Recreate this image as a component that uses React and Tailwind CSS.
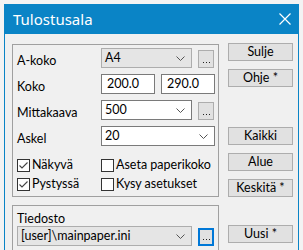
import React from 'react';

const font = { fontFamily: 'Lato, "Noto Sans", sans-serif' };
const titleFont = { fontFamily: '"Noto Sans", sans-serif' };

function Chevron() {
  return (
    <svg width="9" height="5" viewBox="0 0 9 5" className="shrink-0">
      <path d="M0.5 0.5 L4.5 4.5 L8.5 0.5" fill="none" stroke="#555" strokeWidth="1" />
    </svg>
  );
}

function Combo({ value, width, gray }) {
  return (
    <div
      className={`h-[20px] flex items-center justify-between pl-[3px] pr-[6px] border ${gray ? 'bg-[#e5e5e5] border-[#adadad]' : 'bg-white border-[#7a7a7a]'}`}
      style={{ width }}
    >
      <span className="leading-none">{value}</span>
      <Chevron />
    </div>
  );
}

function Dots({ focused }) {
  return (
    <div
      className={`w-[16px] h-[18px] mt-[2px] flex items-end justify-center gap-[2px] pb-[4px] bg-[#e1e1e1] ${focused ? 'border-2 border-[#0078d7]' : 'border border-[#adadad]'}`}
    >
      <div className="w-[1px] h-[1px] bg-[#222]" />
      <div className="w-[1px] h-[1px] bg-[#222]" />
      <div className="w-[1px] h-[1px] bg-[#222]" />
    </div>
  );
}

function Check({ checked, label }) {
  return (
    <div className="flex items-center h-[13px]">
      <div className="w-[13px] h-[13px] border border-[#333] bg-white flex items-center justify-center">
        {checked && (
          <svg width="11" height="11" viewBox="0 0 11 11">
            <path d="M1.5 5.5 L4 8 L9.5 2.5" fill="none" stroke="#444" strokeWidth="1.1" />
          </svg>
        )}
      </div>
      <span className="ml-[2px] leading-none">{label}</span>
    </div>
  );
}

function Btn({ children, className = '' }) {
  return (
    <div className={`w-[65px] h-[18px] bg-[#e1e1e1] border border-[#adadad] flex items-center justify-center leading-none ${className}`}>
      {children}
    </div>
  );
}

function Row({ label, children }) {
  return (
    <div className="flex items-start h-[20px]">
      <div className="w-[84px] pt-[7px] leading-none">{label}</div>
      <div className="flex">{children}</div>
    </div>
  );
}

export default function App() {
  return (
    <div className="w-[303px] h-[250px] overflow-hidden bg-[#f3f3f3] pt-[4px] pl-[4px] pr-[4px] text-[12.5px] text-black" style={font}>
      <div className="w-[295px] h-[260px] border-x border-[#0a84c6] bg-[#f0f0f0]">
        {/* Title bar */}
        <div className="h-[30px] bg-[#0a84c6] flex items-center justify-between pl-[8px] pr-[7px] text-white">
          <span className="text-[15px] leading-none" style={titleFont}>Tulostusala</span>
          <svg width="12" height="12" viewBox="0 0 12 12">
            <path d="M0.5 0.5 L11.5 11.5 M11.5 0.5 L0.5 11.5" stroke="white" strokeWidth="1.2" />
          </svg>
        </div>

        <div className="flex">
          {/* Left */}
          <div className="ml-[7px] flex flex-col">
            <div className="mt-[10px] w-[207px] h-[153px] border border-[#a0a0a0] pl-[4px] pt-[3px] flex flex-col">
              <div className="flex flex-col gap-[6px]">
                <Row label="A-koko">
                  <Combo value="A4" width={91} gray />
                  <div className="ml-[6px]"><Dots /></div>
                </Row>
                <Row label="Koko">
                  <div className="w-[54px] h-[20px] bg-white border border-[#7a7a7a] flex items-center pl-[5px] leading-none">200.0</div>
                  <div className="ml-[6px] w-[54px] h-[20px] bg-white border border-[#7a7a7a] flex items-center pl-[5px] leading-none">290.0</div>
                </Row>
                <Row label="Mittakaava">
                  <Combo value="500" width={91} />
                  <div className="ml-[6px]"><Dots /></div>
                </Row>
                <Row label="Askel">
                  <Combo value="20" width={114} />
                </Row>
              </div>
              <div className="mt-[13px] grid grid-cols-[84px_1fr] gap-y-[6px]">
                <Check checked label="Näkyvä" />
                <Check label="Aseta paperikoko" />
                <Check checked label="Pystyssä" />
                <Check label="Kysy asetukset" />
              </div>
            </div>

            <div className="mt-[8px] w-[207px] h-[60px] border border-[#a0a0a0] pl-[4px] pt-[7px]">
              <div className="leading-none h-[12px]">Tiedosto</div>
              <div className="flex mt-[1px]">
                <Combo value="[user]\mainpaper.ini" width={175} gray />
                <div className="ml-[6px]"><Dots focused /></div>
              </div>
            </div>
          </div>

          {/* Right buttons */}
          <div className="ml-[9px] mt-[9px] flex flex-col">
            <Btn>Sulje</Btn>
            <Btn className="mt-[8px]">Ohje *</Btn>
            <Btn className="mt-[40px]">Kaikki</Btn>
            <Btn className="mt-[8px]">Alue</Btn>
            <Btn className="mt-[8px]">Keskitä *</Btn>
            <Btn className="mt-[28px]">Uusi *</Btn>
          </div>
        </div>
      </div>
    </div>
  );
}
